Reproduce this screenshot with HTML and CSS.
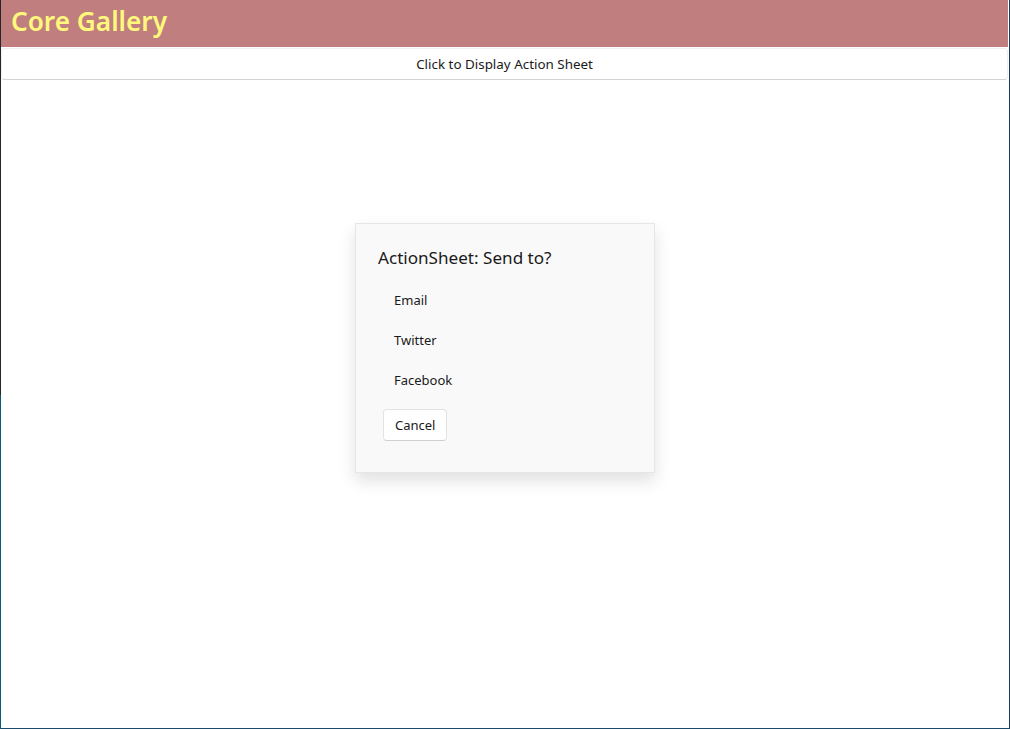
FILE: index.html
```html
<!DOCTYPE html>
<html>
<head>
<meta charset="utf-8">
<link rel="stylesheet" href="styles.css">
</head>
<body>
<div class="window">
  <header class="titlebar"><h1 class="title">Core Gallery</h1></header>
  <main class="content">
    <button class="wide-btn">Click to Display Action Sheet</button>
  </main>
  <div class="sheet">
    <div class="sheet-title">ActionSheet: Send to?</div>
    <div class="sheet-item">Email</div>
    <div class="sheet-item">Twitter</div>
    <div class="sheet-item">Facebook</div>
    <button class="cancel">Cancel</button>
  </div>
</div>
</body>
</html>
```
FILE: styles.css
```css
html, body {
  margin: 0;
  padding: 0;
  height: 100%;
  background: #fff;
  font-family: "Noto Sans", "Open Sans", sans-serif;
}
.window {
  position: relative;
  box-sizing: border-box;
  height: 729px;
  width: 1010px;
  border-right: 1px solid #1c3b5e;
  border-bottom: 1px solid #1c4a6a;
  border-left: 1px solid transparent;
  display: flex;
  flex-direction: column;
}
.window::before {
  content: "";
  position: absolute;
  left: -1px;
  top: 0;
  bottom: -1px;
  width: 1px;
  background: linear-gradient(to bottom, #262626 0, #262626 395px, #0d5a78 395px, #0d5a78 100%);
}
.titlebar {
  height: 47px;
  box-sizing: border-box;
  background: #c07e7e;
  display: flex;
  align-items: center;
  padding: 0 0 5px 10px;
  margin-right: 1px;
}
.title {
  margin: 0;
  font-size: 26.2px;
  line-height: 34px;
  font-weight: 600;
  color: #fff87c;
}
.content {
  flex: 1;
  padding: 1px 1px 0 0;
}
.wide-btn {
  display: block;
  width: 100%;
  height: 32px;
  box-sizing: border-box;
  background: #fff;
  border: 1px solid #efefef;
  border-bottom-color: #d2d2d2;
  border-radius: 4px;
  font-family: inherit;
  font-size: 13.4px;
  color: #1a1a1a;
  padding: 0;
}
.sheet {
  position: absolute;
  top: 223px;
  left: 354px;
  width: 300px;
  height: 250px;
  box-sizing: border-box;
  background: #f9f9f9;
  border: 1px solid #e6e6e6;
  box-shadow: 0 8px 16px rgba(0,0,0,0.12);
  padding: 20px 24px 31px 22px;
  display: flex;
  flex-direction: column;
  align-items: flex-start;
}
.sheet-title {
  font-size: 17.1px;
  line-height: 28px;
  height: 28px;
  color: #1a1a1a;
  margin-bottom: 8px;
}
.sheet-item {
  height: 40px;
  line-height: 40px;
  font-size: 13px;
  color: #1a1a1a;
  margin-left: 5px;
  padding-left: 11px;
}
.cancel {
  margin-top: 9px;
  margin-left: 5px;
  height: 32px;
  padding: 0 11px;
  box-sizing: border-box;
  background: #fff;
  border: 1px solid #e3e3e3;
  border-bottom-color: #d0d0d0;
  border-radius: 4px;
  font-family: inherit;
  font-size: 13px;
  color: #1a1a1a;
}
```
